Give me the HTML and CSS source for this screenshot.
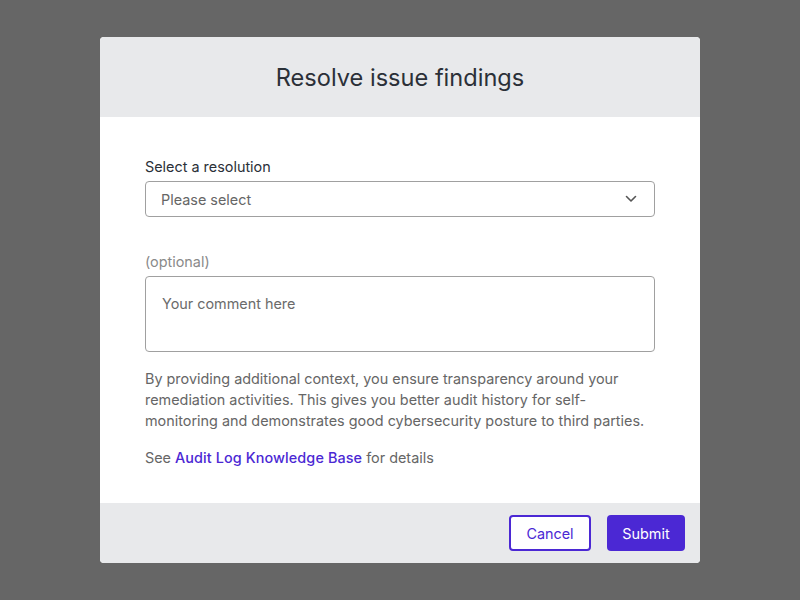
FILE: index.html
```html
<!DOCTYPE html>
<html>
<head>
<meta charset="utf-8">
<link rel="stylesheet" href="styles.css">
</head>
<body>
<div class="backdrop">
  <div class="modal">
    <div class="modal-header">
      <h1 class="title">Resolve issue findings</h1>
    </div>
    <div class="modal-body">
      <label class="field-label">Select a resolution</label>
      <div class="select">
        <span class="select-text">Please select</span>
        <svg class="chevron" width="12" height="8" viewBox="0 0 12 8"><path d="M1.5 1.5 L6 6 L10.5 1.5" fill="none" stroke="#555" stroke-width="1.6" stroke-linecap="round" stroke-linejoin="round"/></svg>
      </div>
      <label class="field-label optional">(optional)</label>
      <div class="textarea"><span class="placeholder">Your comment here</span></div>
      <p class="help">By providing additional context, you ensure transparency around your remediation activities. This gives you better audit history for self-monitoring and demonstrates good cybersecurity posture to third parties.</p>
      <p class="help see">See <a class="link" href="#">Audit Log Knowledge Base</a> for details</p>
    </div>
    <div class="modal-footer">
      <button class="btn btn-outline">Cancel</button>
      <button class="btn btn-primary">Submit</button>
    </div>
  </div>
</div>
</body>
</html>
```
FILE: styles.css
```css
html, body {
  margin: 0;
  padding: 0;
  height: 100%;
}
body {
  background: #666666;
  font-family: Inter, "Noto Sans", sans-serif;
}
.backdrop {
  display: flex;
  justify-content: center;
  padding-top: 37px;
}
.modal {
  width: 600px;
  background: #fff;
  border-radius: 4px;
  overflow: hidden;
}
.modal-header {
  background: #e8e9eb;
  height: 80px;
  display: flex;
  align-items: center;
  justify-content: center;
}
.title {
  margin: 0;
  font-size: 23.6px;
  font-weight: 400;
  color: #2b3038;
}
.modal-body {
  padding: 40px 45px 35px;
}
.field-label {
  display: block;
  font-size: 14.4px;
  line-height: 20px;
  color: #2b3038;
  margin-bottom: 4px;
}
.optional {
  color: #8a8a8a;
}
.select {
  height: 36px;
  box-sizing: border-box;
  border: 1px solid #a0a0a0;
  border-radius: 4px;
  display: flex;
  align-items: center;
  justify-content: space-between;
  padding: 0 17px 0 15px;
  margin-bottom: 35px;
}
.select-text {
  font-size: 14.4px;
  color: #666;
}
.textarea {
  height: 76px;
  box-sizing: border-box;
  border: 1px solid #a0a0a0;
  border-radius: 4px;
  padding: 16px 16px;
  margin-bottom: 16px;
}
.placeholder {
  font-size: 14.4px;
  line-height: 20px;
  color: #6b6b6b;
}
.help {
  margin: 0;
  font-size: 14.4px;
  line-height: 21px;
  color: #666;
}
.see {
  margin-top: 16px;
}
.link {
  color: #4b28d4;
  text-decoration: none;
  font-weight: 500;
  letter-spacing: 0.1px;
}
.modal-footer {
  background: #e8e9eb;
  height: 60px;
  display: flex;
  align-items: center;
  justify-content: flex-end;
  gap: 16px;
  padding-right: 15px;
}
.btn {
  height: 36px;
  border-radius: 4px;
  font-family: Inter, "Noto Sans", sans-serif;
  font-size: 14.4px;
  padding: 0 10px;
  box-sizing: border-box;
  cursor: pointer;
}
.btn-outline {
  width: 82px;
  background: #fff;
  border: 2px solid #4b28d4;
  color: #4b28d4;
}
.btn-primary {
  width: 78px;
  background: #4b28d4;
  border: none;
  color: #fff;
}
```
